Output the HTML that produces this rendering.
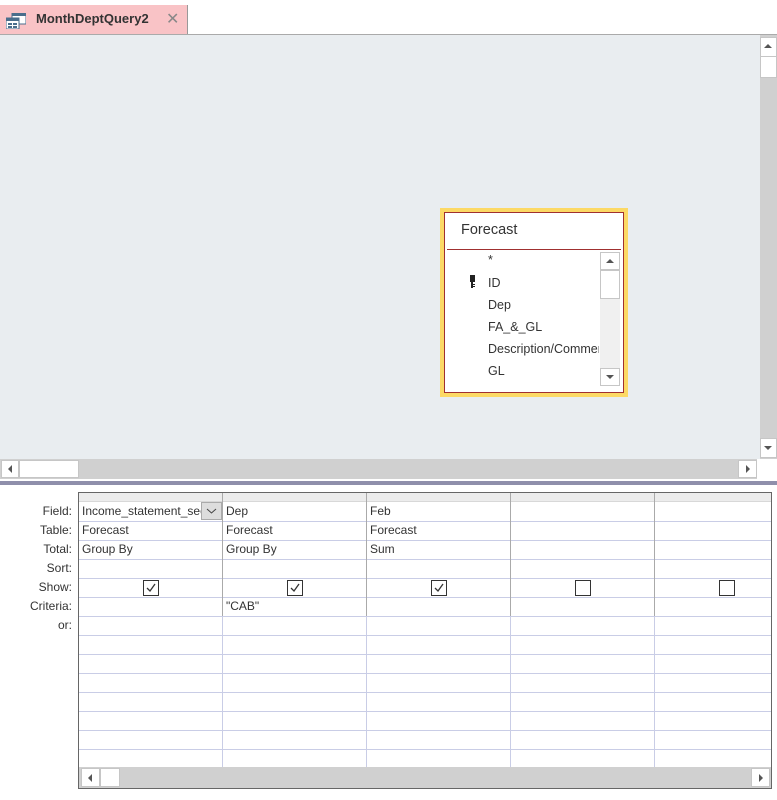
<!DOCTYPE html>
<html><head><meta charset="utf-8"><style>
*{box-sizing:border-box;margin:0;padding:0}
body{width:777px;height:800px;overflow:hidden;background:#fff;position:relative;font-family:"Segoe UI","Liberation Sans",sans-serif;font-size:12px;color:#222}
.a{position:absolute}
.btn{position:absolute;background:#fff;border:1px solid #c6c6c6}
.lbl{position:absolute;right:705px;font-size:12px;color:#333;text-align:right}
.cell{position:absolute;font-size:12px;color:#333}
.cb{position:absolute;width:16px;height:16px;border:1px solid #333;background:#fff}
.fld{position:absolute;left:488px;font-size:12.5px;color:#333}
</style></head><body>
<div class="a" style="left:0;top:0;width:777px;height:5px;background:#fff"></div>
<!-- tab -->
<div class="a" style="left:0;top:5px;width:188px;height:30px;background:#f9c3c6;border-right:1px solid #999"></div>
<div class="a" style="left:0;top:34px;width:777px;height:1px;background:#aaa"></div>
<svg class="a" style="left:6px;top:13px" width="20" height="16" viewBox="0 0 20 16">
<rect x="6" y="0" width="14" height="11" fill="#fff" stroke="#4a6e8c"/><rect x="6" y="0" width="14" height="3" fill="#4a6e8c"/>
<rect x="0" y="5" width="13" height="11" fill="#fff" stroke="#4a6e8c"/><rect x="0" y="5" width="13" height="3" fill="#4a6e8c"/>
<rect x="2" y="10" width="4" height="2" fill="#4a6e8c"/><rect x="7" y="10" width="4" height="2" fill="#4a6e8c"/><rect x="2" y="13" width="4" height="2" fill="#4a6e8c"/><rect x="7" y="13" width="4" height="2" fill="#4a6e8c"/>
</svg>
<div class="a" style="left:36px;top:11px;font-weight:bold;font-size:13px;color:#333">MonthDeptQuery2</div>
<div class="a" style="left:166px;top:9px;font-size:16px;color:#888">✕</div>
<!-- design area -->
<div class="a" style="left:0;top:35px;width:760px;height:424px;background:#e9edf0"></div>
<div class="a" style="left:760px;top:35px;width:17px;height:424px;background:#d0d0d0"></div>
<div class="btn" style="left:760px;top:37px;width:17px;height:20px"></div>
<svg class="a" style="left:763px;top:43px" width="10" height="6"><path d="M1 5L5 1L9 5Z" fill="#555"/></svg>
<div class="btn" style="left:760px;top:56px;width:17px;height:22px"></div>
<div class="btn" style="left:760px;top:438px;width:17px;height:20px"></div>
<svg class="a" style="left:763px;top:445px" width="10" height="6"><path d="M1 1L5 5L9 1Z" fill="#555"/></svg>
<div class="a" style="left:0;top:459px;width:757px;height:20px;background:#d0d0d0"></div>
<div class="btn" style="left:1px;top:460px;width:18px;height:18px"></div>
<svg class="a" style="left:7px;top:464px" width="6" height="10"><path d="M5 1L1 5L5 9Z" fill="#555"/></svg>
<div class="btn" style="left:19px;top:460px;width:60px;height:18px"></div>
<div class="btn" style="left:738px;top:460px;width:19px;height:18px"></div>
<svg class="a" style="left:745px;top:464px" width="6" height="10"><path d="M1 1L5 5L1 9Z" fill="#555"/></svg>
<div class="a" style="left:757px;top:459px;width:20px;height:20px;background:#fff"></div>
<!-- table box -->
<div class="a" style="left:440px;top:208px;width:188px;height:189px;background:#fcd965"></div>
<div class="a" style="left:444px;top:212px;width:180px;height:181px;background:#fff;border:1px solid #a03030"></div>
<div class="a" style="left:461px;top:222px;font-size:14.5px;color:#333">Forecast</div>
<div class="a" style="left:447px;top:249px;width:174px;height:1px;background:#a03030"></div>
<div class="fld" style="top:253px">*</div>
<svg class="a" style="left:470px;top:275px" width="6" height="13"><rect x="0" y="0" width="5" height="7" fill="#222"/><rect x="1" y="7" width="2" height="6" fill="#222"/><rect x="3" y="9" width="2" height="1" fill="#222"/><rect x="3" y="11" width="2" height="1" fill="#222"/></svg>
<div class="fld" style="top:276px">ID</div>
<div class="fld" style="top:298px">Dep</div>
<div class="fld" style="top:320px">FA_&amp;_GL</div>
<div class="fld" style="top:342px;width:111px;overflow:hidden;white-space:nowrap">Description/Comments</div>
<div class="fld" style="top:364px">GL</div>
<div class="a" style="left:600px;top:252px;width:20px;height:134px;background:#f0f0f0"></div>
<div class="btn" style="left:600px;top:252px;width:20px;height:18px"></div>
<svg class="a" style="left:605px;top:258px" width="10" height="6"><path d="M1 5L5 1L9 5Z" fill="#555"/></svg>
<div class="btn" style="left:600px;top:270px;width:20px;height:29px"></div>
<div class="btn" style="left:600px;top:368px;width:20px;height:18px"></div>
<svg class="a" style="left:605px;top:374px" width="10" height="6"><path d="M1 1L5 5L9 1Z" fill="#555"/></svg>
<!-- divider -->
<div class="a" style="left:0;top:481px;width:777px;height:4px;background:#8f8fab"></div>
<!-- grid -->
<div class="a" style="left:78px;top:492px;width:694px;height:297px;border:1px solid #666;background:#fff"></div>
<div class="a" style="left:79px;top:493px;width:692px;height:9px;background:#ececec;border-bottom:1px solid #d8d8d8"></div>
<svg class="a" style="left:79px;top:493px" width="692" height="275">
<g stroke="#c9cde6" stroke-width="1">
<line x1="0" y1="28.5" x2="692" y2="28.5"/><line x1="0" y1="47.5" x2="692" y2="47.5"/><line x1="0" y1="66.5" x2="692" y2="66.5"/><line x1="0" y1="85.5" x2="692" y2="85.5"/><line x1="0" y1="104.5" x2="692" y2="104.5"/><line x1="0" y1="123.5" x2="692" y2="123.5"/><line x1="0" y1="142.5" x2="692" y2="142.5"/><line x1="0" y1="161.5" x2="692" y2="161.5"/><line x1="0" y1="180.5" x2="692" y2="180.5"/><line x1="0" y1="199.5" x2="692" y2="199.5"/><line x1="0" y1="218.5" x2="692" y2="218.5"/><line x1="0" y1="237.5" x2="692" y2="237.5"/><line x1="0" y1="256.5" x2="692" y2="256.5"/>
</g>
<g stroke="#c9cde6"><line x1="143.5" y1="0" x2="143.5" y2="275"/><line x1="287.5" y1="0" x2="287.5" y2="275"/><line x1="431.5" y1="0" x2="431.5" y2="275"/><line x1="575.5" y1="0" x2="575.5" y2="275"/></g>
<g stroke="#aaa"><line x1="143.5" y1="0" x2="143.5" y2="123"/><line x1="287.5" y1="0" x2="287.5" y2="123"/><line x1="431.5" y1="0" x2="431.5" y2="123"/><line x1="575.5" y1="0" x2="575.5" y2="123"/></g>
</svg>
<div class="lbl" style="top:504px">Field:</div>
<div class="lbl" style="top:523px">Table:</div>
<div class="lbl" style="top:542px">Total:</div>
<div class="lbl" style="top:561px">Sort:</div>
<div class="lbl" style="top:580px">Show:</div>
<div class="lbl" style="top:599px">Criteria:</div>
<div class="lbl" style="top:618px">or:</div>
<div class="cell" style="left:82px;top:504px;width:119px;overflow:hidden;white-space:nowrap">Income_statement_section</div>
<div class="a" style="left:201px;top:502px;width:21px;height:18px;background:#ddd;border:1px solid #aaa"></div>
<svg class="a" style="left:206px;top:508px" width="11" height="6"><path d="M1 1L5.5 5L10 1" fill="none" stroke="#444"/></svg>
<div class="cell" style="left:226px;top:504px">Dep</div>
<div class="cell" style="left:370px;top:504px">Feb</div>
<div class="cell" style="left:82px;top:523px">Forecast</div>
<div class="cell" style="left:226px;top:523px">Forecast</div>
<div class="cell" style="left:370px;top:523px">Forecast</div>
<div class="cell" style="left:82px;top:542px">Group By</div>
<div class="cell" style="left:226px;top:542px">Group By</div>
<div class="cell" style="left:370px;top:542px">Sum</div>
<div class="cell" style="left:226px;top:599px">"CAB"</div>
<div class="cb" style="left:143px;top:580px"></div>
<div class="cb" style="left:287px;top:580px"></div>
<div class="cb" style="left:431px;top:580px"></div>
<div class="cb" style="left:575px;top:580px"></div>
<div class="cb" style="left:719px;top:580px"></div>
<svg class="a" style="left:143px;top:580px" width="16" height="16"><path d="M4 8L7 11L12 4" fill="none" stroke="#333" stroke-width="1.3"/></svg>
<svg class="a" style="left:287px;top:580px" width="16" height="16"><path d="M4 8L7 11L12 4" fill="none" stroke="#333" stroke-width="1.3"/></svg>
<svg class="a" style="left:431px;top:580px" width="16" height="16"><path d="M4 8L7 11L12 4" fill="none" stroke="#333" stroke-width="1.3"/></svg>
<!-- grid scrollbar -->
<div class="a" style="left:79px;top:767px;width:692px;height:21px;background:#d0d0d0"></div>
<div class="btn" style="left:81px;top:768px;width:19px;height:19px"></div>
<svg class="a" style="left:87px;top:773px" width="6" height="10"><path d="M5 1L1 5L5 9Z" fill="#555"/></svg>
<div class="btn" style="left:100px;top:768px;width:20px;height:19px"></div>
<div class="btn" style="left:751px;top:768px;width:19px;height:19px"></div>
<svg class="a" style="left:758px;top:773px" width="6" height="10"><path d="M1 1L5 5L1 9Z" fill="#555"/></svg>
</body></html>
